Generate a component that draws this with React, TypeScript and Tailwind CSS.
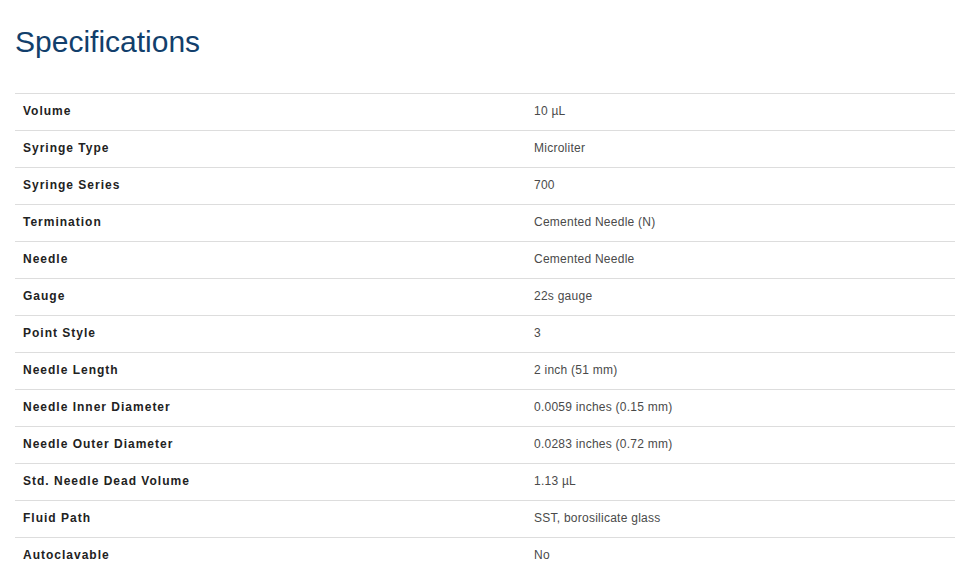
const specs: [string, string][] = [
  ["Volume", "10 µL"],
  ["Syringe Type", "Microliter"],
  ["Syringe Series", "700"],
  ["Termination", "Cemented Needle (N)"],
  ["Needle", "Cemented Needle"],
  ["Gauge", "22s gauge"],
  ["Point Style", "3"],
  ["Needle Length", "2 inch (51 mm)"],
  ["Needle Inner Diameter", "0.0059 inches (0.15 mm)"],
  ["Needle Outer Diameter", "0.0283 inches (0.72 mm)"],
  ["Std. Needle Dead Volume", "1.13 µL"],
  ["Fluid Path", "SST, borosilicate glass"],
  ["Autoclavable", "No"],
];

export default function App() {
  return (
    <div className="min-h-screen bg-white px-[15px] pt-[24px] font-['Liberation_Sans',Arial,sans-serif]">
      <h1 className="text-[30px] leading-[36px] font-normal text-[#123f6c]">Specifications</h1>
      <table className="mt-[33px] w-[940px] border-collapse text-[12px] leading-[20px]">
        <tbody>
          {specs.map(([label, value]) => (
            <tr key={label} className="border-t border-[#dddddd]">
              <td className="w-[511px] px-2 pt-[7px] pb-[9px] font-bold tracking-[1px] text-[#222222]">{label}</td>
              <td className="px-2 pt-[7px] pb-[9px] tracking-[0.25px] text-[#4a4a4a]">{value}</td>
            </tr>
          ))}
        </tbody>
      </table>
    </div>
  );
}
